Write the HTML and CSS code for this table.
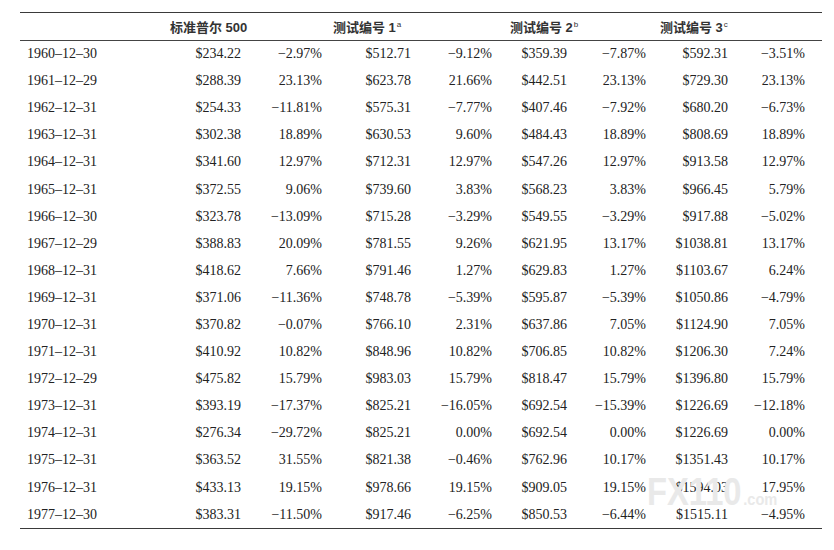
FILE: index.html
```html
<!DOCTYPE html>
<html lang="zh-CN">
<head>
<meta charset="utf-8">
<title>标准普尔 500 测试</title>
<link rel="stylesheet" href="styles.css">
</head>
<body>
<div class="page">
  <div class="sheet">
    <div class="row head">
      <div class="cell"></div>
      <div class="label l1">标准普尔 500</div>
      <div class="label l2">测试编号 1<sup>a</sup></div>
      <div class="label l3">测试编号 2<sup>b</sup></div>
      <div class="label l4">测试编号 3<sup>c</sup></div>
    </div>
    <div id="body"></div>
  </div>
  <div class="mark"><span class="mark-big">FX110</span><span class="mark-small">.com</span></div>
</div>
<script>
var data = [
["1960–12–30","$234.22","−2.97%","$512.71","−9.12%","$359.39","−7.87%","$592.31","−3.51%"],
["1961–12–29","$288.39","23.13%","$623.78","21.66%","$442.51","23.13%","$729.30","23.13%"],
["1962–12–31","$254.33","−11.81%","$575.31","−7.77%","$407.46","−7.92%","$680.20","−6.73%"],
["1963–12–31","$302.38","18.89%","$630.53","9.60%","$484.43","18.89%","$808.69","18.89%"],
["1964–12–31","$341.60","12.97%","$712.31","12.97%","$547.26","12.97%","$913.58","12.97%"],
["1965–12–31","$372.55","9.06%","$739.60","3.83%","$568.23","3.83%","$966.45","5.79%"],
["1966–12–30","$323.78","−13.09%","$715.28","−3.29%","$549.55","−3.29%","$917.88","−5.02%"],
["1967–12–29","$388.83","20.09%","$781.55","9.26%","$621.95","13.17%","$1038.81","13.17%"],
["1968–12–31","$418.62","7.66%","$791.46","1.27%","$629.83","1.27%","$1103.67","6.24%"],
["1969–12–31","$371.06","−11.36%","$748.78","−5.39%","$595.87","−5.39%","$1050.86","−4.79%"],
["1970–12–31","$370.82","−0.07%","$766.10","2.31%","$637.86","7.05%","$1124.90","7.05%"],
["1971–12–31","$410.92","10.82%","$848.96","10.82%","$706.85","10.82%","$1206.30","7.24%"],
["1972–12–29","$475.82","15.79%","$983.03","15.79%","$818.47","15.79%","$1396.80","15.79%"],
["1973–12–31","$393.19","−17.37%","$825.21","−16.05%","$692.54","−15.39%","$1226.69","−12.18%"],
["1974–12–31","$276.34","−29.72%","$825.21","0.00%","$692.54","0.00%","$1226.69","0.00%"],
["1975–12–31","$363.52","31.55%","$821.38","−0.46%","$762.96","10.17%","$1351.43","10.17%"],
["1976–12–31","$433.13","19.15%","$978.66","19.15%","$909.05","19.15%","$1594.03","17.95%"],
["1977–12–30","$383.31","−11.50%","$917.46","−6.25%","$850.53","−6.44%","$1515.11","−4.95%"]
];
var body = document.getElementById("body");
data.forEach(function (r) {
  var row = document.createElement("div");
  row.className = "row";
  r.forEach(function (v, i) {
    var c = document.createElement("div");
    c.className = i === 0 ? "cell date" : "cell num";
    c.textContent = v;
    row.appendChild(c);
  });
  body.appendChild(row);
});
</script>
</body>
</html>
```
FILE: styles.css
```css
html, body {
  margin: 0;
  padding: 0;
  background: #ffffff;
}

.page {
  position: relative;
  width: 834px;
  height: 550px;
  padding-top: 12px;
  box-sizing: border-box;
  color: #222222;
  font-family: "Liberation Serif", "Times New Roman", serif;
  font-size: 14px;
}

.sheet {
  position: relative;
  margin-left: 20px;
  width: 802px;
  border-top: 1.5px solid #3a3a3a;
  border-bottom: 1.2px solid #3a3a3a;
}

.row {
  display: grid;
  grid-template-columns: 140px 81px 81px 89px 81px 75px 79px 82px 77px 17px;
  align-items: center;
  height: 27.1px;
}

.head {
  height: 26.5px;
  border-bottom: 1px solid #444;
  font-family: "Liberation Sans", "Noto Sans CJK SC", sans-serif;
  font-size: 13px;
  font-weight: bold;
  color: #333;
}

.label {
  grid-column: span 2;
  white-space: nowrap;
}

.label sup {
  font-size: 8px;
  font-weight: normal;
  vertical-align: 5px;
  margin-left: 1px;
}

.l1 { padding-left: 10px; }
.l2 { padding-left: 11px; }
.l3 { padding-left: 18px; }
.l4 { padding-left: 14px; }

.cell {
  white-space: nowrap;
}

.date {
  padding-left: 7px;
}

.num {
  text-align: right;
}

.mark {
  position: absolute;
  left: 647px;
  top: 478px;
  height: 28px;
  color: #e9e9e9;
  font-family: "Liberation Sans", "Arial", sans-serif;
  font-weight: bold;
  white-space: nowrap;
  line-height: 28px;
  transform: scaleX(0.86);
  transform-origin: left top;
}

.mark-big {
  font-size: 38px;
}

.mark-small {
  font-size: 17px;
  margin-left: 2px;
}
```
